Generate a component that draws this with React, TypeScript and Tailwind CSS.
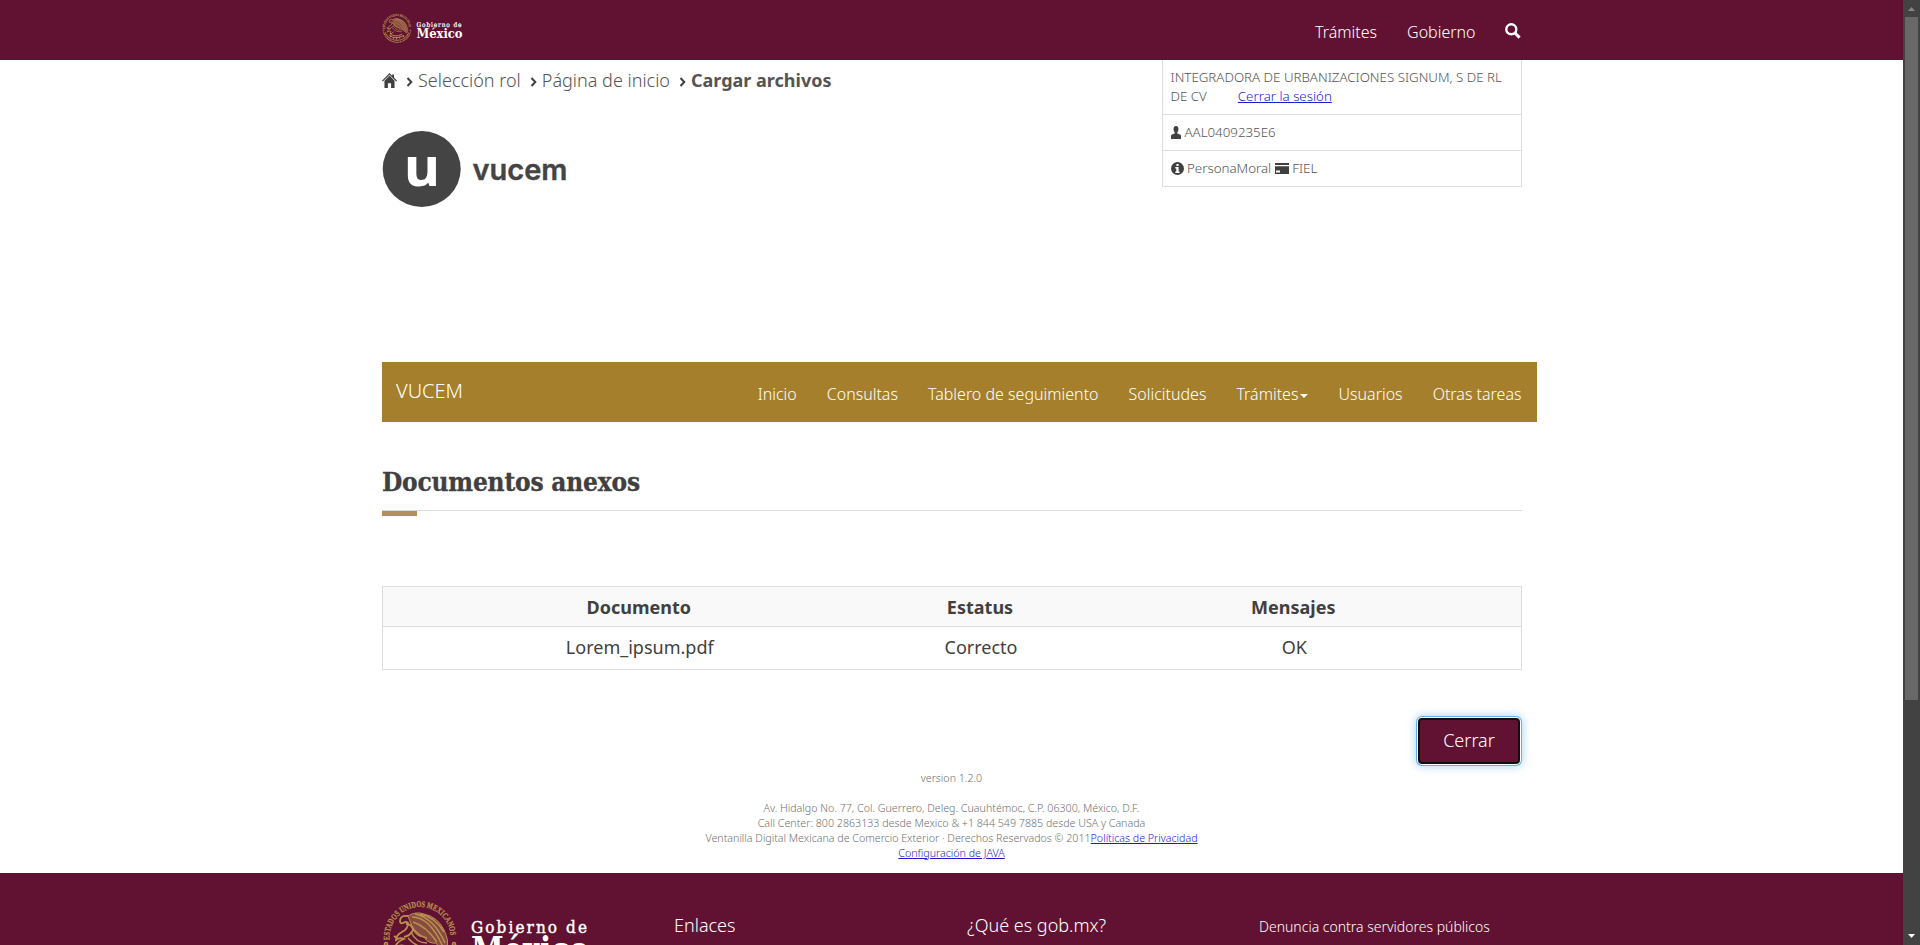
import React from "react";

const menu = ["Inicio", "Consultas", "Tablero de seguimiento", "Solicitudes", "Trámites", "Usuarios", "Otras tareas"];

function Seal({ size }: { size: number }) {
  return (
    <svg width={size} height={size} viewBox="0 0 76 76" fill="none" stroke="#b9924f" className="overflow-visible">
      <defs>
        <path id="seal-arc" d="M8 41 A30.500 30.500 0 1 1 68 41" />
      </defs>
      <text fill="#b9924f" stroke="#b9924f" strokeWidth=".25" fontFamily="Liberation Serif, serif" fontWeight="700" fontSize="8.600">
        <textPath href="#seal-arc" textLength="96" lengthAdjust="spacingAndGlyphs" startOffset="3">ESTADOS UNIDOS MEXICANOS</textPath>
      </text>
      <circle cx="4" cy="42" r="1.500" strokeWidth="1.600" />
      <circle cx="72" cy="42" r="1.500" strokeWidth="1.600" />
      <path d="M4 47Q13 70 38 72Q63 70 72 47M8 47Q16 65 38 67Q60 65 68 47" strokeWidth="2.600" strokeDasharray="3 1" />
      <path d="M26 14q-8-1-8 5q0 3 3 2q3-2 5 0q0 6-6 9q-6 3-6 8q4-3 8-1q-8 3-9 9q5-4 10-2q-4 4-1 8q2-5 8-7M12 34l4 3M24 22q6 0 7 6q-3 6-9 7" strokeWidth="1.800" />
      <path d="M26 14q8-5 16-2q14 3 20 16q6 12 2 20q-6 0-10-7q-8 1-12-6q-8 0-11-8z" fill="#b9924f" fillOpacity=".45" strokeWidth="1" />
      <path d="M30 15q18 0 31 30M33 12q19 4 30 29M38 12q15 3 24 18M31 20q13 4 24 20M30 25q6 9 15 11M29 30q5 11 16 11M26 36q10 12 25 9" strokeWidth="1.500" />
      <path d="M21 49q12 12 30 2M18 53q15 14 38 1M29 58v5M37 59v6M45 57v5M53 55l3 4M23 55l-3 4" strokeWidth="2.400" />
    </svg>
  );
}

function Chevron() {
  return (
    <svg width="8" height="10" viewBox="0 0 8 10" fill="none" stroke="#404041" strokeWidth="2" className="mt-[2px]">
      <path d="M1.500 1l3.800 4-3.800 4" />
    </svg>
  );
}

function Header() {
  return (
    <header className="h-[60px] shrink-0 bg-[#611232]">
      <div className="mx-auto flex h-full w-[1140px] justify-between text-white">
        <div className="flex pt-[14px]">
          <Seal size={30} />
          <svg className="ml-[4px]" width="48" height="30" fill="#fff" fontFamily="DejaVu Serif Condensed, DejaVu Serif, serif">
            <text x="0.500" y="12.500" fontSize="6.500" fontWeight="400" stroke="#fff" strokeWidth=".2" textLength="45">Gobierno de</text>
            <text x="0.500" y="24" fontSize="13.500" fontWeight="700" textLength="46" lengthAdjust="spacingAndGlyphs">México</text>
          </svg>
        </div>
        <nav className="flex items-start pt-[21px] text-[16px] leading-[22px]">
          <a className="mr-[30px]">Trámites</a>
          <a className="mr-[29px]">Gobierno</a>
          <svg className="mr-[1px] mt-[2px]" width="16" height="16" viewBox="0 0 16 16" fill="none" stroke="#fff">
            <circle cx="6.300" cy="6.300" r="5" strokeWidth="2.400" />
            <path d="M10 10l4.600 4.600" strokeWidth="3" />
          </svg>
        </nav>
      </div>
    </header>
  );
}

function Breadcrumb() {
  return (
    <div className="flex h-[41px] items-center text-[18px] text-[#545454]">
      <svg width="15" height="15" viewBox="0 0 16 15" fill="#404041" preserveAspectRatio="none">
        <path d="M8 0l2.800 2.700V1.400h2v3.200L16 7.800l-.9.8L8 1.800.9 8.600 0 7.800z" />
        <path d="M8 2.500l5.400 5.200V15H9.700v-4.800H6.300V15H2.600V7.700z" />
      </svg>
      <div className="ml-[9px] flex items-center gap-[4px]"><Chevron /><span>Selección rol</span></div>
      <div className="ml-[9px] flex items-center gap-[4px]"><Chevron /><span>Página de inicio</span></div>
      <div className="ml-[9px] flex items-center gap-[4px]"><Chevron /><span className="font-bold">Cargar archivos</span></div>
    </div>
  );
}

function UserBox() {
  return (
    <div className="w-[360px] border-x border-b border-[#ddd] text-[13.300px] leading-[19px] text-[#545454]">
      <div className="h-[55px] border-b border-[#ddd] pl-[7.500px] pt-[7.500px]">
        <div className="whitespace-nowrap">INTEGRADORA DE URBANIZACIONES SIGNUM, S DE RL</div>
        <div className="flex gap-[31px]"><span>DE CV</span><a className="text-[#1d1dd0] underline">Cerrar la sesión</a></div>
      </div>
      <div className="flex h-[36px] items-center gap-[4px] border-b border-[#ddd] pb-[1px] pl-[7.500px]">
        <svg width="10" height="13" viewBox="0 0 11 13" fill="#404041" preserveAspectRatio="none">
          <path d="M5.500 0C7.300 0 8.400 1.300 8.200 3.300 8 5 7.300 6 6.900 6.400v1l3 1.200c.8.4 1.100.9 1.100 1.800V13H0v-2.600c0-.9.3-1.400 1.100-1.800l3-1.200v-1C3.700 6 3 5 2.800 3.300 2.600 1.300 3.700 0 5.500 0z" />
        </svg>
        <span>AAL0409235E6</span>
      </div>
      <div className="flex h-[35px] items-center gap-[3.500px] pb-[1px] pl-[7.500px]">
        <svg width="13" height="13" viewBox="0 0 13 13">
          <circle cx="6.500" cy="6.500" r="6.500" fill="#404041" />
          <path d="M5.400 2h2.200v2H5.400zM4.300 5.100h3.300v4.400h1V11H4.300V9.500h1V6.500h-1z" fill="#fff" />
        </svg>
        <span>PersonaMoral</span>
        <svg width="14" height="11" viewBox="0 0 14 11" fill="#404041">
          <path d="M0 0h14v2H0zM0 3.200h14V11H0zM1 7.500v2h4v-2z" fillRule="evenodd" />
        </svg>
        <span>FIEL</span>
      </div>
    </div>
  );
}

export default function App() {
  return (
    <div className="flex h-[945px] w-[1920px] overflow-hidden bg-white font-light [font-family:'Noto_Sans',sans-serif]">
      <div className="flex h-full w-[1903px] flex-col overflow-hidden">
        <Header />
        <main className="ml-[382px] flex h-[813px] w-[1155px] shrink-0 flex-col">
          <div className="flex h-[302px] w-[1140px] items-start justify-between">
            <div>
              <Breadcrumb />
              <svg className="mt-[29px] overflow-visible" width="190" height="78" viewBox="0 0 190 78" fill="#444" fontFamily="Inter, sans-serif" fontWeight="700">
                <ellipse cx="39.700" cy="39" rx="39" ry="38" />
                <text x="22" y="56" fontSize="54" fill="#fff" fontFamily="Noto Sans, sans-serif" fontWeight="700" textLength="36" lengthAdjust="spacingAndGlyphs">u</text>
                <text x="90.500" y="49.500" fontSize="29" fontWeight="600" stroke="#444" strokeWidth=".4" textLength="95" lengthAdjust="spacingAndGlyphs">vucem</text>
              </svg>
            </div>
            <UserBox />
          </div>
          <nav className="flex h-[60px] justify-between bg-[#a57f2c] pl-[14px] pr-[15.500px] text-white">
            <span className="pt-[15px] text-[20px] leading-[28px]">VUCEM</span>
            <div className="flex items-start gap-[30px] pt-[21px] text-[16px] leading-[22px]">
              {menu.map((m) => (
                <a key={m} className="flex items-center">
                  {m}
                  {m === "Trámites" && <span className="ml-[2px] mt-[3px] border-x-4 border-t-4 border-x-transparent border-t-white" />}
                </a>
              ))}
            </div>
          </nav>
          <div className="h-[89px] w-[1140px] border-b border-[#d9dfdf] pt-[43px]">
            <h1 className="whitespace-nowrap text-[26px] font-bold leading-[34px] tracking-[-0.200px] text-[#404041] [-webkit-text-stroke:0.300px_#404041] [font-family:'DejaVu_Serif_Condensed','DejaVu_Serif',serif] [font-stretch:condensed]">Documentos anexos</h1>
          </div>
          <div className="h-[5px] w-[35px] bg-[#b38e5d]" />
          <table className="mt-[70px] w-[1140px] table-fixed border-collapse border border-[#ddd] text-center text-[18px] text-[#404041]">
            <thead>
              <tr className="h-[40px] border-b border-[#ddd] bg-[#f9f9f9]">
                <th className="w-[512px] pt-[2px] font-bold">Documento</th>
                <th className="w-[171px] pt-[2px] font-bold">Estatus</th>
                <th className="pt-[2px] font-bold">Mensajes</th>
              </tr>
            </thead>
            <tbody>
              <tr className="h-[43px] font-normal">
                <td className="pb-[2px] pl-[2px]">Lorem_ipsum.pdf</td>
                <td className="pb-[2px] pl-[2px]">Correcto</td>
                <td className="pb-[2px] pl-[2px]">OK</td>
              </tr>
            </tbody>
          </table>
          <div className="mt-[48px] flex w-[1140px] justify-end pr-[2px]">
            <button className="h-[46px] w-[102px] rounded-[4px] border-2 border-[#101010] bg-[#611232] pb-[2px] text-[18px] font-light text-white shadow-[0_0_0_1px_#fff,0_0_0_2px_#66afe9,0_0_10px_2px_rgba(102,175,233,0.6)]">Cerrar</button>
          </div>
          <div className="mt-[7px] flex w-[1139px] flex-col items-center whitespace-nowrap text-[10.660px] leading-[15px] text-[#707070]">
            <p>version 1.2.0</p>
            <p className="mt-[15px]">Av. Hidalgo No. 77, Col. Guerrero, Deleg. Cuauhtémoc, C.P. 06300, México, D.F.</p>
            <p>Call Center: 800 2863133 desde Mexico &amp; +1 844 549 7885 desde USA y Canada</p>
            <p>Ventanilla Digital Mexicana de Comercio Exterior · Derechos Reservados © 2011<a className="text-[#1d1dd0] underline">Políticas de Privacidad</a></p>
            <a className="text-[#1d1dd0] underline">Configuración de JAVA</a>
          </div>
        </main>
        <footer className="h-[72px] shrink-0 overflow-hidden bg-[#611232] pl-[382px] text-white">
          <div className="grid grid-cols-[292px_293px_292px_293px] text-[18px] leading-[26px]">
            <div className="flex h-[72px] overflow-hidden pt-[29px]">
              <div className="h-[76px] shrink-0"><Seal size={76} /></div>
              <svg className="ml-[13px] shrink-0" width="125" height="70" fill="#fff" fontFamily="DejaVu Serif Condensed, DejaVu Serif, serif">
                <text x="0" y="30.500" fontSize="17" fontWeight="400" stroke="#fff" strokeWidth=".4" textLength="116" lengthAdjust="spacing">Gobierno de</text>
                <text x="0" y="59" fontSize="34" fontWeight="700" textLength="118" lengthAdjust="spacingAndGlyphs">México</text>
              </svg>
            </div>
            <span className="pt-[39px]">Enlaces</span>
            <span className="pt-[39px]">¿Qué es gob.mx?</span>
            <span className="pt-[41px] text-[14px]">Denuncia contra servidores públicos</span>
          </div>
        </footer>
      </div>
      <div className="flex h-full w-[17px] flex-col items-center bg-[#424242]">
        <svg width="17" height="17" fill="#868686"><path d="M5 11h7L8.500 7z" /></svg>
        <div className="h-[683px] w-[13px] bg-[#686868]" />
        <svg className="mt-auto" width="17" height="17" fill="#fff"><path d="M5 6h7l-3.500 4z" /></svg>
      </div>
    </div>
  );
}
